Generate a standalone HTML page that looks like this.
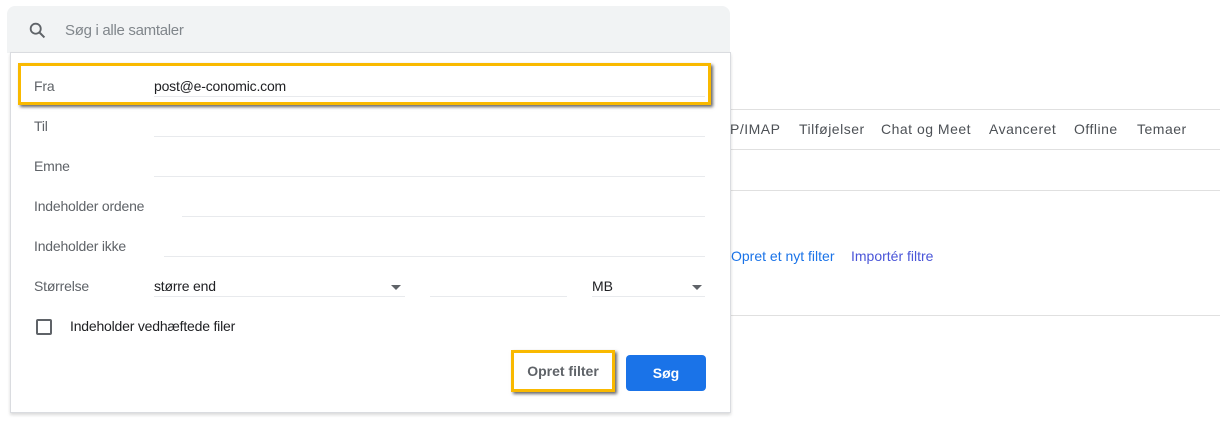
<!DOCTYPE html>
<html><head><meta charset="utf-8"><style>
body{margin:0;width:1220px;height:423px;background:#fff;position:relative;overflow:hidden;font-family:"Liberation Sans",sans-serif;}
.a{position:absolute;}
.hl{position:absolute;height:1px;background:#e0e0e0;}
.lbl{position:absolute;font-size:14px;color:#5f6368;letter-spacing:-0.2px;}
.ul{position:absolute;height:1px;background:#e8eaed;}
.tab{position:absolute;top:121px;font-size:14px;color:#4d5156;letter-spacing:0.5px;}
.arr{position:absolute;width:0;height:0;border-left:5px solid transparent;border-right:5px solid transparent;border-top:5px solid #5f6368;}
</style></head><body>
<div class="hl" style="left:730px;top:109px;width:490px;"></div>
<div class="tab" style="left:730px;">P/IMAP</div>
<div class="tab" style="left:799px;">Tilføjelser</div>
<div class="tab" style="left:881px;">Chat og Meet</div>
<div class="tab" style="left:989px;">Avanceret</div>
<div class="tab" style="left:1074px;">Offline</div>
<div class="tab" style="left:1137px;">Temaer</div>
<div class="hl" style="left:730px;top:149px;width:490px;"></div>
<div class="hl" style="left:730px;top:190px;width:490px;"></div>
<div class="a" style="left:731px;top:248px;font-size:14px;color:#1a73e8;">Opret et nyt filter</div>
<div class="a" style="left:851px;top:248px;font-size:14px;color:#4a55d8;">Importér filtre</div>
<div class="hl" style="left:730px;top:315px;width:490px;"></div>

<div class="a" style="left:7px;top:6px;width:723px;height:47px;background:#f1f3f4;border-radius:8px 8px 0 0;"></div>
<svg class="a" style="left:27px;top:20px" width="22" height="22" viewBox="0 0 24 24"><circle cx="9.5" cy="9.5" r="5.5" fill="none" stroke="#5f6368" stroke-width="2"/><path d="M13.5 13.5L19 19" stroke="#5f6368" stroke-width="2.2"/></svg>
<div class="a" style="left:65px;top:22px;font-size:15px;color:#80868b;letter-spacing:-0.3px;">Søg i alle samtaler</div>

<div class="a" style="left:10px;top:52px;width:719px;height:359px;background:#fff;border:1px solid #dadce0;box-shadow:0 2px 3px rgba(0,0,0,.15);"></div>

<div class="lbl" style="left:34px;top:78px;">Fra</div>
<div class="a" style="left:154px;top:78px;font-size:14px;color:#202124;letter-spacing:-0.2px;">post@e-conomic.com</div>
<div class="ul" style="left:154px;top:96px;width:551px;"></div>
<div class="a" style="left:18px;top:63px;width:687px;height:36px;border:3px solid #f9b900;box-shadow:2px 2px 3px rgba(0,0,0,.6);"></div>

<div class="lbl" style="left:34px;top:118px;">Til</div>
<div class="ul" style="left:154px;top:136px;width:551px;"></div>
<div class="lbl" style="left:34px;top:158px;">Emne</div>
<div class="ul" style="left:154px;top:176px;width:551px;"></div>
<div class="lbl" style="left:34px;top:198px;">Indeholder ordene</div>
<div class="ul" style="left:182px;top:216px;width:523px;"></div>
<div class="lbl" style="left:34px;top:238px;">Indeholder ikke</div>
<div class="ul" style="left:164px;top:256px;width:541px;"></div>
<div class="lbl" style="left:34px;top:278px;">Størrelse</div>
<div class="a" style="left:154px;top:278px;font-size:14px;color:#202124;letter-spacing:-0.2px;">større end</div>
<div class="arr" style="left:391px;top:285px;"></div>
<div class="ul" style="left:154px;top:296px;width:251px;"></div>
<div class="ul" style="left:430px;top:296px;width:137px;"></div>
<div class="a" style="left:592px;top:278px;font-size:14px;color:#202124;">MB</div>
<div class="arr" style="left:692px;top:285px;"></div>
<div class="ul" style="left:592px;top:296px;width:113px;"></div>

<div class="a" style="left:36px;top:319px;width:12px;height:12px;border:2px solid #5f6368;border-radius:2px;"></div>
<div class="lbl" style="left:70px;top:318px;color:#202124;">Indeholder vedhæftede filer</div>

<div class="a" style="left:511px;top:350px;width:98px;height:36px;border:3px solid #f9b900;box-shadow:2px 2px 3px rgba(0,0,0,.6);background:#fff;font-size:14px;font-weight:bold;color:#5f6368;text-align:center;line-height:36px;">Opret filter</div>
<div class="a" style="left:626px;top:355px;width:80px;height:36px;background:#1a73e8;border-radius:4px;color:#fff;font-size:14px;font-weight:bold;text-align:center;line-height:36px;">Søg</div>
</body></html>
